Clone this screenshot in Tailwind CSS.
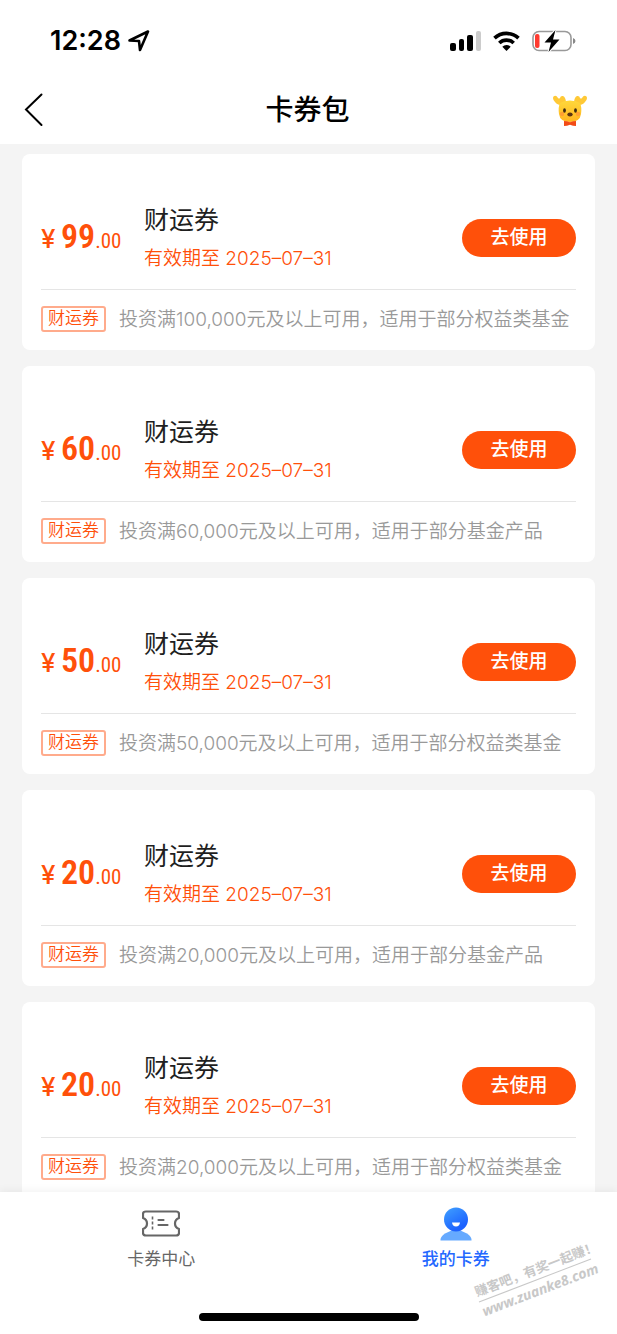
<!DOCTYPE html>
<html lang="zh-CN">
<head>
<meta charset="utf-8">
<meta name="viewport" content="width=device-width, initial-scale=1">
<title>卡券包</title>
<script src="https://cdn.jsdelivr.net/npm/@tailwindcss/browser@4"></script>
</head>
<body class="flex h-screen flex-col overflow-hidden bg-[#f4f4f4] font-['Inter','Noto_Sans_CJK_SC',sans-serif] text-[#1f1f1f]">
<header class="shrink-0 bg-white text-black">
  <div class="flex h-20 items-center justify-between pl-[50px] pr-[41px] pt-[2px]">
    <div class="flex items-center gap-[7px]">
      <span class="text-[27px] font-semibold leading-8">12:28</span>
      <svg class="size-[22px]" viewBox="0 0 22 22" fill="none" stroke="currentColor" stroke-width="2.6" stroke-linejoin="round" aria-hidden="true"><path d="M1.500 10.500 20 1.500 12 20 11 11Z"/></svg>
    </div>
    <div class="flex items-center gap-3">
      <svg class="h-5 w-[31px]" viewBox="0 0 31 20" aria-hidden="true"><rect y="12" width="6" height="8" rx="2"/><rect x="9" y="8" width="5" height="12" rx="2"/><rect x="17" y="4" width="6" height="16" rx="2"/><rect x="26" width="5" height="20" rx="2" fill="#ccc"/></svg>
      <svg class="h-5 w-[27px]" viewBox="0 0 27 20" fill="none" stroke="#000" stroke-width="3.700" aria-hidden="true"><path d="M1.500 7.200a17.500 17.500 0 0 1 24 0M6.300 12a10.500 10.500 0 0 1 14.400 0"/><path d="M13.500 20 9.300 15.800a6 6 0 0 1 8.400 0Z" fill="#000" stroke="none"/></svg>
      <svg class="h-6 w-11" viewBox="0 0 44 24" aria-hidden="true"><rect x="1" y="2.500" width="38" height="19" rx="6" fill="none" stroke="#999" stroke-width="1.600"/><path d="M41 9q2.500 1 2.500 3T41 15Z" fill="#888"/><rect x="3" y="5" width="4.500" height="14" rx="2" fill="#ff3b30"/><path d="M23.500 1 12.500 13.500H19L16.500 23 27.500 10.500H21Z" stroke="#fff" stroke-width="2" paint-order="stroke"/></svg>
    </div>
  </div>
  <div class="flex h-16 items-start justify-between pl-6 pr-[30px]">
    <button type="button" aria-label="返回" class="mt-3 h-9 w-[34px]"><svg class="h-9 w-5" viewBox="0 0 20 36" fill="none" stroke="currentColor" stroke-width="2" aria-hidden="true"><path d="M17.500 2.500 2 17.500 17.500 33" stroke-linecap="round"/></svg></button>
    <h1 class="mt-[10px] pl-1 text-[28px] font-medium leading-10">卡券包</h1>
    <button type="button" aria-label="客服" class="mt-[14px] h-8 w-[34px]">
      <svg class="h-8 w-[34px]" viewBox="0 0 34 32" aria-hidden="true">
        <defs><linearGradient id="deer" x2="0" y2="1"><stop stop-color="#ffd83b"/><stop offset="1" stop-color="#ffb51f"/></linearGradient></defs>
        <g fill="#ffc936"><path d="M13 11Q5 12 2 8-1 5 .5 2.500 3 .5 5 4 6 5 7 4 7.500 1.500 10 2 12.500 3 13 8Z"/><path d="M21 11q8 1 11-3 3-3 1.500-5.500Q31 .5 29 4 28 5 27 4 26.500 1.500 24 2 21.500 3 21 8Z"/></g>
        <path d="M7 9q4-2.500 10-2.500T27 9q2 4 1 11-1 8-11 8T6 20Q5 13 7 9Z" fill="url(#deer)"/>
        <circle cx="9" cy="20" r="2.200" fill="#ffa032"/><circle cx="25" cy="20" r="2.200" fill="#ffa032"/>
        <ellipse cx="11.500" cy="16.500" rx="1.400" ry="2.200" fill="#3d2a12"/><ellipse cx="22.500" cy="16.500" rx="1.400" ry="2.200" fill="#3d2a12"/>
        <ellipse cx="17" cy="20.500" rx="2.700" ry="1.900" fill="#5b3413"/>
        <path d="M11 27q3 0 6 1.300 3-1.300 6-1.300v5q-3 0-6-1.200-3 1.200-6 1.200Z" fill="#f24b16"/>
      </svg>
    </button>
  </div>
</header>

<main class="min-h-0 flex-1 overflow-y-auto px-[22px] pt-[10px] [scrollbar-width:none]">
  <ul class="flex flex-col gap-4">
    <li class="rounded-lg bg-white px-[19px] pb-0.5 pt-12">
      <div class="flex h-[88px] items-start border-b border-[#e5e5e5]">
        <p class="mt-[14px] flex w-[103px] shrink-0 items-baseline font-['Roboto_Condensed','Roboto',sans-serif] leading-10 text-[#ff500a]"><span class="w-5 font-['Inter',sans-serif] text-[26px] font-medium leading-10">¥</span><span class="text-[34px] font-semibold">99</span><span class="text-[21px]">.00</span></p>
        <div class="min-w-0 flex-1">
          <h2 class="text-[25px] leading-9">财运券</h2>
          <p class="mt-[7px] text-[19px] font-[350] leading-7 text-[#ff500a]">有效期至 2025–07–31</p>
        </div>
        <button type="button" class="mt-[17px] h-[38px] w-[114px] rounded-full bg-[#ff500a] text-[19px] font-medium text-white">去使用</button>
      </div>
      <div class="flex h-[58px] items-center gap-[13px]">
        <span class="flex h-[26px] w-[65px] shrink-0 items-center justify-center rounded-[3px] border-2 border-[#ffab8c] text-[17px] font-[350] text-[#ff500a]">财运券</span>
        <p class="whitespace-nowrap pt-0.5 text-[19px] font-[350] leading-7 text-[#999]">投资满100,000元及以上可用，适用于部分权益类基金</p>
      </div>
    </li>
    <li class="rounded-lg bg-white px-[19px] pb-0.5 pt-12">
      <div class="flex h-[88px] items-start border-b border-[#e5e5e5]">
        <p class="mt-[14px] flex w-[103px] shrink-0 items-baseline font-['Roboto_Condensed','Roboto',sans-serif] leading-10 text-[#ff500a]"><span class="w-5 font-['Inter',sans-serif] text-[26px] font-medium leading-10">¥</span><span class="text-[34px] font-semibold">60</span><span class="text-[21px]">.00</span></p>
        <div class="min-w-0 flex-1">
          <h2 class="text-[25px] leading-9">财运券</h2>
          <p class="mt-[7px] text-[19px] font-[350] leading-7 text-[#ff500a]">有效期至 2025–07–31</p>
        </div>
        <button type="button" class="mt-[17px] h-[38px] w-[114px] rounded-full bg-[#ff500a] text-[19px] font-medium text-white">去使用</button>
      </div>
      <div class="flex h-[58px] items-center gap-[13px]">
        <span class="flex h-[26px] w-[65px] shrink-0 items-center justify-center rounded-[3px] border-2 border-[#ffab8c] text-[17px] font-[350] text-[#ff500a]">财运券</span>
        <p class="whitespace-nowrap pt-0.5 text-[19px] font-[350] leading-7 text-[#999]">投资满60,000元及以上可用，适用于部分基金产品</p>
      </div>
    </li>
    <li class="rounded-lg bg-white px-[19px] pb-0.5 pt-12">
      <div class="flex h-[88px] items-start border-b border-[#e5e5e5]">
        <p class="mt-[14px] flex w-[103px] shrink-0 items-baseline font-['Roboto_Condensed','Roboto',sans-serif] leading-10 text-[#ff500a]"><span class="w-5 font-['Inter',sans-serif] text-[26px] font-medium leading-10">¥</span><span class="text-[34px] font-semibold">50</span><span class="text-[21px]">.00</span></p>
        <div class="min-w-0 flex-1">
          <h2 class="text-[25px] leading-9">财运券</h2>
          <p class="mt-[7px] text-[19px] font-[350] leading-7 text-[#ff500a]">有效期至 2025–07–31</p>
        </div>
        <button type="button" class="mt-[17px] h-[38px] w-[114px] rounded-full bg-[#ff500a] text-[19px] font-medium text-white">去使用</button>
      </div>
      <div class="flex h-[58px] items-center gap-[13px]">
        <span class="flex h-[26px] w-[65px] shrink-0 items-center justify-center rounded-[3px] border-2 border-[#ffab8c] text-[17px] font-[350] text-[#ff500a]">财运券</span>
        <p class="whitespace-nowrap pt-0.5 text-[19px] font-[350] leading-7 text-[#999]">投资满50,000元及以上可用，适用于部分权益类基金</p>
      </div>
    </li>
    <li class="rounded-lg bg-white px-[19px] pb-0.5 pt-12">
      <div class="flex h-[88px] items-start border-b border-[#e5e5e5]">
        <p class="mt-[14px] flex w-[103px] shrink-0 items-baseline font-['Roboto_Condensed','Roboto',sans-serif] leading-10 text-[#ff500a]"><span class="w-5 font-['Inter',sans-serif] text-[26px] font-medium leading-10">¥</span><span class="text-[34px] font-semibold">20</span><span class="text-[21px]">.00</span></p>
        <div class="min-w-0 flex-1">
          <h2 class="text-[25px] leading-9">财运券</h2>
          <p class="mt-[7px] text-[19px] font-[350] leading-7 text-[#ff500a]">有效期至 2025–07–31</p>
        </div>
        <button type="button" class="mt-[17px] h-[38px] w-[114px] rounded-full bg-[#ff500a] text-[19px] font-medium text-white">去使用</button>
      </div>
      <div class="flex h-[58px] items-center gap-[13px]">
        <span class="flex h-[26px] w-[65px] shrink-0 items-center justify-center rounded-[3px] border-2 border-[#ffab8c] text-[17px] font-[350] text-[#ff500a]">财运券</span>
        <p class="whitespace-nowrap pt-0.5 text-[19px] font-[350] leading-7 text-[#999]">投资满20,000元及以上可用，适用于部分基金产品</p>
      </div>
    </li>
    <li class="rounded-lg bg-white px-[19px] pb-0.5 pt-12">
      <div class="flex h-[88px] items-start border-b border-[#e5e5e5]">
        <p class="mt-[14px] flex w-[103px] shrink-0 items-baseline font-['Roboto_Condensed','Roboto',sans-serif] leading-10 text-[#ff500a]"><span class="w-5 font-['Inter',sans-serif] text-[26px] font-medium leading-10">¥</span><span class="text-[34px] font-semibold">20</span><span class="text-[21px]">.00</span></p>
        <div class="min-w-0 flex-1">
          <h2 class="text-[25px] leading-9">财运券</h2>
          <p class="mt-[7px] text-[19px] font-[350] leading-7 text-[#ff500a]">有效期至 2025–07–31</p>
        </div>
        <button type="button" class="mt-[17px] h-[38px] w-[114px] rounded-full bg-[#ff500a] text-[19px] font-medium text-white">去使用</button>
      </div>
      <div class="flex h-[58px] items-center gap-[13px]">
        <span class="flex h-[26px] w-[65px] shrink-0 items-center justify-center rounded-[3px] border-2 border-[#ffab8c] text-[17px] font-[350] text-[#ff500a]">财运券</span>
        <p class="whitespace-nowrap pt-0.5 text-[19px] font-[350] leading-7 text-[#999]">投资满20,000元及以上可用，适用于部分权益类基金</p>
      </div>
    </li>
  </ul>
</main>

<footer class="relative shrink-0 bg-white shadow-[0_-2px_8px_rgba(0,0,0,0.05)]">
  <nav class="mx-[14px] grid h-[121px] grid-cols-2 pt-[14px] text-[17px] leading-6">
    <a href="#center" class="flex flex-col items-center gap-[5px] text-[#666]">
      <svg class="h-9 w-[38px]" viewBox="0 0 38 36" fill="none" stroke="currentColor" stroke-width="2.200" aria-hidden="true"><path d="M4 5.500H34Q37 5.500 37 8V12Q33 13.500 33 17.500T37 23V27Q37 29.500 34 29.500H4Q1 29.500 1 27V23Q5 21.500 5 17.500T1 12V8Q1 5.500 4 5.500Z" stroke-linejoin="round"/><path d="M10.500 10.500v3m0 2v3m0 2v3" stroke-width="1.600"/><path d="M16.500 14h5M16.500 19h9" stroke-linecap="round"/></svg>
      卡券中心
    </a>
    <a href="#mine" aria-current="page" class="flex flex-col items-center gap-[5px] font-medium text-[#2468ff]">
      <svg class="h-9 w-8" viewBox="0 0 32 36" aria-hidden="true"><defs><linearGradient id="head" x1=".2" x2=".7" y2=".8"><stop stop-color="#3d9bff"/><stop offset="1" stop-color="#1c62ff"/></linearGradient></defs><path d="M.5 34.500Q0 31 5 27.500 16 21 27 27.500 32 31 31.500 34.500Z" fill="#66aaff"/><circle cx="16" cy="13.500" r="12" fill="url(#head)"/><path d="M12 16.500h8q-.5 4-4 4t-4-4Z" fill="#fff"/></svg>
      我的卡券
    </a>
  </nav>
  <div class="mx-auto mb-[13px] h-2 w-[220px] rounded-full bg-black"></div>
  <div class="absolute bottom-[33px] right-[22px] w-[120px] -rotate-[21deg] font-['Noto_Sans','Noto_Sans_CJK_SC',sans-serif] font-bold text-[#c8c8c8]">
    <p class="whitespace-nowrap border-b border-[#c8c8c8] text-[13px] leading-5">赚客吧，有奖一起赚！</p>
    <p class="text-[14px] italic leading-5">www.zuanke8.com</p>
  </div>
</footer>
</body>
</html>
